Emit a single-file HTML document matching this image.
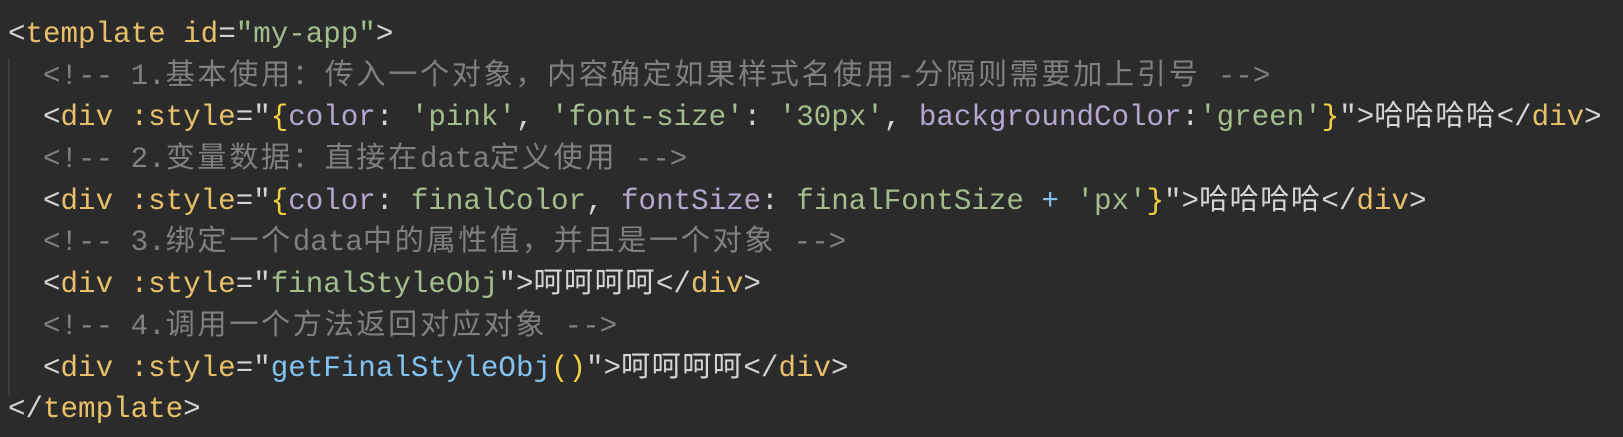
<!DOCTYPE html>
<html><head><meta charset="utf-8"><style>
html,body{margin:0;padding:0;background:#2b2b2b;width:1623px;height:437px;overflow:hidden}
.code{padding:14px 0 0 8px;font-family:"Liberation Mono","Noto Sans CJK SC",monospace;font-size:29.2px;color:#d4d4d4;position:relative}
.l{height:41.7px;line-height:41.7px;white-space:pre;overflow:visible}
.c{color:#808080}.t{color:#e8c06a}.s{color:#a3be8c}.p{color:#b5a6d0}.v{color:#a3be8c}.b{color:#f5d142}.f{color:#82c3f0}
.z{font-family:"Noto Sans CJK SC",sans-serif;letter-spacing:1.4px;line-height:1}
.c .z{letter-spacing:2.6px}
.guide{position:absolute;left:8px;top:58px;width:2px;height:338px;background:#3d3d3d}
</style></head><body>
<div class="code"><div class="guide"></div>
<div class="l">&lt;<span class="t">template</span> <span class="t">id</span>=<span class="s">"my-app"</span>&gt;</div>
<div class="l">  <span class="c">&lt;!-- 1.<span class="z">基本使用：传入一个对象，内容确定如果样式名使用</span>-<span class="z">分隔则需要加上引号</span> --&gt;</span></div>
<div class="l">  &lt;<span class="t">div</span> <span class="t">:style</span>="<span class="b">{</span><span class="p">color</span>: <span class="v">'pink'</span>, <span class="v">'font-size'</span>: <span class="v">'30px'</span>, <span class="p">backgroundColor</span>:<span class="v">'green'</span><span class="b">}</span>"&gt;<span class="z">哈哈哈哈</span>&lt;/<span class="t">div</span>&gt;</div>
<div class="l">  <span class="c">&lt;!-- 2.<span class="z">变量数据：直接在</span>data<span class="z">定义使用</span> --&gt;</span></div>
<div class="l">  &lt;<span class="t">div</span> <span class="t">:style</span>="<span class="b">{</span><span class="p">color</span>: <span class="v">finalColor</span>, <span class="p">fontSize</span>: <span class="v">finalFontSize</span> <span class="f">+</span> <span class="v">'px'</span><span class="b">}</span>"&gt;<span class="z">哈哈哈哈</span>&lt;/<span class="t">div</span>&gt;</div>
<div class="l">  <span class="c">&lt;!-- 3.<span class="z">绑定一个</span>data<span class="z">中的属性值，并且是一个对象</span> --&gt;</span></div>
<div class="l">  &lt;<span class="t">div</span> <span class="t">:style</span>="<span class="v">finalStyleObj</span>"&gt;<span class="z">呵呵呵呵</span>&lt;/<span class="t">div</span>&gt;</div>
<div class="l">  <span class="c">&lt;!-- 4.<span class="z">调用一个方法返回对应对象</span> --&gt;</span></div>
<div class="l">  &lt;<span class="t">div</span> <span class="t">:style</span>="<span class="f">getFinalStyleObj</span><span class="b">()</span>"&gt;<span class="z">呵呵呵呵</span>&lt;/<span class="t">div</span>&gt;</div>
<div class="l">&lt;/<span class="t">template</span>&gt;</div>
</div>
</body></html>
